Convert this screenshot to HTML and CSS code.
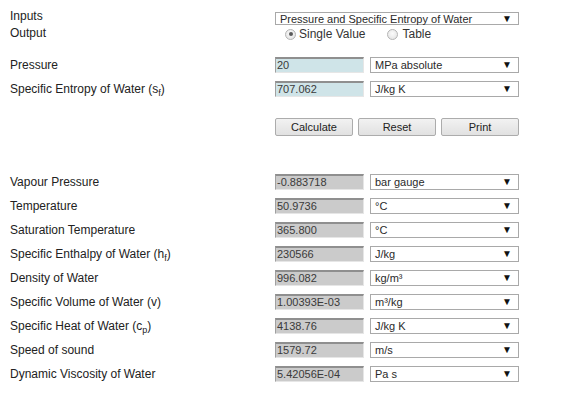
FILE: index.html
```html
<!DOCTYPE html>
<html>
<head>
<meta charset="utf-8">
<link rel="stylesheet" href="styles.css">
</head>
<body>
<div class="page">
  <div class="row row-inputs">
    <div class="label">Inputs</div>
    <div class="select wide"><span>Pressure and Specific Entropy of Water</span><span class="arrow">▼</span></div>
  </div>
  <div class="row row-output">
    <div class="label">Output</div>
    <div class="radios">
      <span class="radio checked"></span><span class="radio-text">Single Value</span>
      <span class="radio"></span><span class="radio-text">Table</span>
    </div>
  </div>

  <div class="section">
    <div class="row">
      <div class="label">Pressure</div>
      <div class="field in">20</div>
      <div class="select"><span>MPa absolute</span><span class="arrow">▼</span></div>
    </div>
    <div class="row">
      <div class="label">Specific Entropy of Water (s<sub>f</sub>)</div>
      <div class="field in">707.062</div>
      <div class="select"><span>J/kg K</span><span class="arrow">▼</span></div>
    </div>
  </div>

  <div class="buttons">
    <div class="btn">Calculate</div>
    <div class="btn">Reset</div>
    <div class="btn">Print</div>
  </div>

  <div class="outputs">
    <div class="row">
      <div class="label">Vapour Pressure</div>
      <div class="field out">-0.883718</div>
      <div class="select"><span>bar gauge</span><span class="arrow">▼</span></div>
    </div>
    <div class="row">
      <div class="label">Temperature</div>
      <div class="field out">50.9736</div>
      <div class="select"><span>°C</span><span class="arrow">▼</span></div>
    </div>
    <div class="row">
      <div class="label">Saturation Temperature</div>
      <div class="field out">365.800</div>
      <div class="select"><span>°C</span><span class="arrow">▼</span></div>
    </div>
    <div class="row">
      <div class="label">Specific Enthalpy of Water (h<sub>f</sub>)</div>
      <div class="field out">230566</div>
      <div class="select"><span>J/kg</span><span class="arrow">▼</span></div>
    </div>
    <div class="row">
      <div class="label">Density of Water</div>
      <div class="field out">996.082</div>
      <div class="select"><span>kg/m³</span><span class="arrow">▼</span></div>
    </div>
    <div class="row">
      <div class="label">Specific Volume of Water (v)</div>
      <div class="field out">1.00393E-03</div>
      <div class="select"><span>m³/kg</span><span class="arrow">▼</span></div>
    </div>
    <div class="row">
      <div class="label">Specific Heat of Water (c<sub>p</sub>)</div>
      <div class="field out">4138.76</div>
      <div class="select"><span>J/kg K</span><span class="arrow">▼</span></div>
    </div>
    <div class="row">
      <div class="label">Speed of sound</div>
      <div class="field out">1579.72</div>
      <div class="select"><span>m/s</span><span class="arrow">▼</span></div>
    </div>
    <div class="row">
      <div class="label">Dynamic Viscosity of Water</div>
      <div class="field out">5.42056E-04</div>
      <div class="select"><span>Pa s</span><span class="arrow">▼</span></div>
    </div>
  </div>
</div>
</body>
</html>
```
FILE: styles.css
```css
html, body {
  margin: 0;
  padding: 0;
  background: #ffffff;
}
body {
  font-family: "Liberation Sans", Arial, sans-serif;
  color: #222222;
}
.page {
  padding: 10px 0 0 10px;
  width: 520px;
}
.row {
  display: flex;
  align-items: center;
  height: 24px;
}
.label {
  width: 265px;
  flex: none;
  font-size: 12px;
  line-height: 14px;
  color: #222222;
}
.label sub {
  font-size: 9px;
  vertical-align: -3px;
  line-height: 0;
}
.row-inputs {
  height: 16px;
  align-items: flex-start;
}
.row-inputs .label {
  margin-top: -1px;
}
.row-inputs .select {
  margin-top: 2px;
  height: 13px;
}
.row-output {
  height: 15px;
  align-items: center;
}
.row-output .label {
  margin-top: -2px;
}
.radios {
  display: flex;
  align-items: center;
  margin-top: 1px;
}
.radio {
  width: 11px;
  height: 11px;
  border-radius: 50%;
  border: 1px solid #b4b4b4;
  background: radial-gradient(circle at 50% 40%, #fbfbfb 0%, #e0e0e0 100%);
  margin-left: 10px;
  margin-right: 3px;
  position: relative;
  box-sizing: border-box;
}
.radio.checked::after {
  content: "";
  position: absolute;
  left: 2.5px;
  top: 2.5px;
  width: 4px;
  height: 4px;
  border-radius: 50%;
  background: #5a5a5a;
}
.radio + .radio-text + .radio {
  margin-left: 21px;
  margin-right: 5px;
}
.radio-text {
  font-size: 12px;
  line-height: 14px;
  color: #333333;
}
.section {
  margin-top: 12px;
}
.field {
  width: 89px;
  height: 16px;
  box-sizing: border-box;
  flex: none;
  font-size: 11px;
  line-height: 13px;
  padding-left: 1px;
  color: #3a3a3a;
  border-top: 2px solid #8f8f8f;
  border-left: 1px solid #a0a0a0;
  border-right: 1px solid #e6e6e6;
  border-bottom: 1px solid #e6e6e6;
  overflow: hidden;
  white-space: nowrap;
}
.field.in {
  background: #cfe4e8;
}
.field.out {
  background: #cbcbcb;
}
.select {
  display: flex;
  align-items: center;
  justify-content: space-between;
  width: 149px;
  height: 16px;
  box-sizing: border-box;
  margin-left: 6px;
  border: 1px solid #a9a9a9;
  background: #ffffff;
  padding: 0 6px 0 4px;
  font-size: 11px;
  color: #2a2a2a;
  flex: none;
}
.select.wide {
  width: 244px;
  margin-left: 0;
  padding-left: 4px;
}
.arrow {
  font-size: 10px;
  line-height: 10px;
  color: #111111;
}
.buttons {
  display: flex;
  gap: 5px;
  margin: 17px 0 0 265px;
}
.btn {
  width: 78px;
  height: 18px;
  box-sizing: border-box;
  border: 1px solid #acacac;
  border-radius: 2px;
  background: linear-gradient(#f2f2f2, #e1e1e1);
  font-size: 11px;
  line-height: 16px;
  text-align: center;
  color: #222222;
}
.outputs {
  margin-top: 34px;
}
```
